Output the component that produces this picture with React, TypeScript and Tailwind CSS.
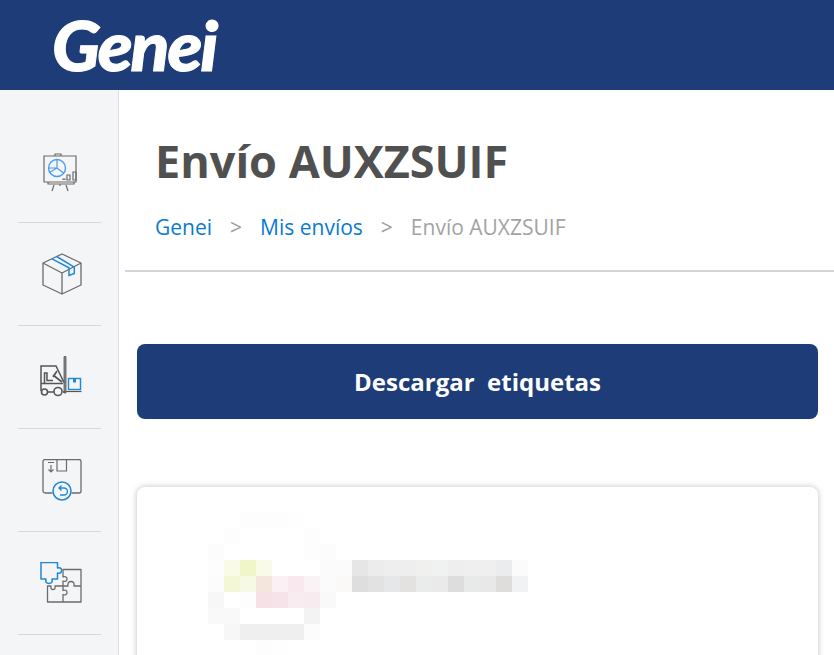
import React from 'react';

const font = "font-['Open_Sans',_'Liberation_Sans',_sans-serif]";

// blurred avatar + name, one row per 16px, starting at x=208 y=512
const mosaic: [number, number, string[]][] = [
  [0, 2, ['#fdfdfd', '#fdfdfd', '#fdfdfd', '#fefefe']],
  [1, 1, ['#fdfdfd', '#fff', '#fff', '#fff', '#fff', '#fdfdfd']],
  [2, 0, ['#fcfcfc', '#fff', '#fff', '#fff', '#fff', '#fff', '#fdfdfd', '#fcfcfc']],
  [3, 0, ['#fdfdfd', '#f9fbe8', '#f1f6c8', '#f9fbe8', '#fff', '#fff', '#fff', '#fbfbfb', '#fbfbfb', '#e6e6e6', '#ececec', '#eeeeee', '#eeeeee', '#f0f0ee', '#f0f2f1', '#eeeeee', '#efefef', '#efefef', '#ebecee', '#fbfbfb']],
  [4, 0, ['#fcfcfc', '#f4f7d5', '#f6f9e4', '#f4e6dc', '#fbf1f4', '#f9e9ee', '#faf3f6', '#fbfbfb', '#faf9f8', '#dedede', '#e2e2e2', '#e6e7e9', '#e4e2e0', '#e9ecea', '#eaeaea', '#dddddd', '#e8eae9', '#e8e8e8', '#dfdddc', '#f1f2f4']],
  [5, 0, ['#f7f7f7', '#fff', '#fdfdfd', '#f6e1e6', '#f6e3e9', '#f9ecf0', '#f7ebf0', '#f9f9f9']],
  [6, 0, ['#f9f9f9', '#f9f9f9', '#fff', '#fff', '#fff', '#fff', '#f3f3f3']],
  [7, 1, ['#f7f7f7', '#efefef', '#efefef', '#efefef', '#efefef', '#fcfcfc']],
  [8, 3, ['#fdfdfd', '#fefefe']],
];

function Logo() {
  return (
    <span className="origin-left scale-x-[1.05] font-['Lato',_sans-serif] text-[68px] leading-none font-black tracking-[-0.03em] text-white italic [-webkit-text-stroke:1px_white]">Genei</span>
  );
}

function ChartIcon() {
  return (
    <svg width="40" height="42" viewBox="0 0 40 42" fill="none" strokeWidth="1.2">
      <path d="M4 6h32v26H4z M15 6V4h6v2 M8 32v2h26v-2 M14 35l-2 6 M26 35l2 6 M20 34v2" stroke="#6b6b6b" />
      <circle cx="17" cy="18" r="8.5" stroke="#4a9cf0" strokeWidth="1.4" />
      <path d="M17 9.5V18l-7.500 4.500 M17 18l6.500 5 M8.500 18H17" stroke="#4a9cf0" strokeWidth="1.2" />
      <path d="M23 30v-1h2v1 M27 30v-5h3v5z M33 30v-8h3v8z" stroke="#6b6b6b" />
    </svg>
  );
}

function BoxIcon() {
  return (
    <svg width="40" height="42" viewBox="0 0 40 42" fill="none" className="ml-[5px]">
      <path d="M20 1L39 10V32L20 41L1 32V10z M1 10L20 20L39 10 M20 20V41" stroke="#6b6b6b" strokeWidth="1.3" strokeLinejoin="round" />
      <path d="M10 5.800L27 14.800V22.500L32.300 20.500V14.200L14.700 3.500" stroke="#1f87d6" strokeWidth="1.5" />
    </svg>
  );
}

function ForkliftIcon() {
  return (
    <svg width="42" height="42" viewBox="0 0 42 42" fill="none" className="ml-[3px]">
      <path d="M24 0.500h2v36.500h-2z" fill="#8a8a8a" stroke="#555555" strokeWidth="0.8" />
      <path d="M26 35.500h15.500" stroke="#555555" strokeWidth="1.2" />
      <path d="M1 35V10h15l8 16.500 M1 27.500h22 M4.500 27V17h2.500v7.500h6" stroke="#555555" strokeWidth="1.5" />
      <path d="M13 19l9 7 M17 15l-4 6" stroke="#555555" strokeWidth="1.7" />
      <path d="M8 36h6 M23 36h2" stroke="#555555" strokeWidth="1.5" />
      <circle cx="4.500" cy="36" r="3" fill="#f4f5f7" stroke="#555555" strokeWidth="1.6" />
      <circle cx="18" cy="35.500" r="4" fill="#f4f5f7" stroke="#555555" strokeWidth="1.6" />
      <rect x="28.500" y="22.500" width="12" height="11" stroke="#1f87d6" strokeWidth="1.4" />
      <rect x="33" y="23" width="3" height="3.500" fill="#1f87d6" />
    </svg>
  );
}

function ReturnIcon() {
  return (
    <svg width="40" height="42" viewBox="0 0 40 42" fill="none" className="ml-[4px]">
      <path d="M10.500 34H3a2 2 0 0 1-2-2V2.500a2 2 0 0 1 2-2h34a2 2 0 0 1 2 2V32a2 2 0 0 1-2 2h-7.500" stroke="#6b6b6b" strokeWidth="1.3" />
      <path d="M15 0.500V12h9.500V0.500 M6 3.500h6 M9 6v7 M6.500 10.500L9 13l2.500-2.500" stroke="#6b6b6b" strokeWidth="1.2" />
      <circle cx="20" cy="32" r="9" stroke="#1f87d6" strokeWidth="1.5" />
      <path d="M17 29h5a3.500 3.500 0 0 1 0 7h-4 M19.500 26.500L17 29l2.500 2.500" stroke="#1f87d6" strokeWidth="1.3" />
    </svg>
  );
}

function PuzzleIcon() {
  return (
    <svg width="42" height="42" viewBox="0 0 42 42" fill="none" className="ml-[3px]">
      <path d="M1 0.500h16.500V6c3.500-0.800 4 1 4 2.500s-0.500 3.300-4 2.500v6H12c0.800 3-0.500 4.500-3 4.500s-3.800-1.500-3-4.500H1z" stroke="#1f87d6" strokeWidth="1.5" strokeLinejoin="round" />
      <path d="M23 7.500h18V40H7.500V24H11c-0.500 3 0.500 3.500 2 3.500s2.500-0.500 2-3.500h8v-5c3 1 4-0.500 4-2s-1-3-4-2z" stroke="#6b6b6b" strokeWidth="1.3" strokeLinejoin="round" />
      <path d="M23 24h5c-0.500-3 0.500-4.500 3-4.500s3.500 1.500 3 4.500h7 M23 24v4.500c3-1 4 0.500 4 2s-1 3-4 2V40" stroke="#6b6b6b" strokeWidth="1.3" strokeLinejoin="round" />
    </svg>
  );
}

const navIcons = [ChartIcon, BoxIcon, ForkliftIcon, ReturnIcon, PuzzleIcon];

export default function App() {
  return (
    <div className={`${font} flex h-[655px] w-[834px] flex-col overflow-hidden bg-white`}>
      <header className="flex h-[90px] shrink-0 items-center bg-[#1e3d78] pl-[52px]">
        <Logo />
      </header>

      <div className="flex min-h-0 flex-1">
        <aside className="w-[119px] shrink-0 border-r border-[#dcdddf] bg-[#f4f5f7] pt-[30px]">
          {navIcons.map((Icon, i) => (
            <div key={i} className="mr-[17px] ml-[18px] flex h-[103px] items-center justify-center border-b border-[#d8d8d8]">
              <Icon />
            </div>
          ))}
        </aside>

        <main className="min-w-0 flex-1">
          <div className="ml-[6px] h-[182px] border-b-2 border-[#d6d6d6] pl-[30px] pt-[41px]">
            <h1 className="text-[45px] leading-[60px] font-bold text-[#505050]">Envío AUXZSUIF</h1>
            <nav className="mt-[22px] flex items-center text-[21px] leading-[28px]">
              <a className="text-[#0a7ad1]">Genei</a>
              <span className="mx-[18px] text-[#9b9b9b]">&gt;</span>
              <a className="text-[#0a7ad1]">Mis envíos</a>
              <span className="mx-[18px] text-[#9b9b9b]">&gt;</span>
              <span className="text-[#a3a3a3]">Envío AUXZSUIF</span>
            </nav>
          </div>

          <div className="pr-[16px] pl-[18px]">
            <button className="mt-[72px] flex h-[75px] w-full items-center justify-center rounded-lg bg-[#1e3d78] text-[24px] font-bold whitespace-pre text-white">
              Descargar  etiquetas
            </button>

            <section className="mt-[68px] h-[240px] rounded-lg bg-white pt-[25px] pl-[71px] shadow-[0_0_6px_rgba(0,0,0,0.25)]">
              <svg width="320" height="144" viewBox="0 0 320 144" shapeRendering="crispEdges">
                {mosaic.map(([row, start, cells]) =>
                  cells.map((fill, col) => (
                    <rect key={`${row}-${col}`} x={(start + col) * 16} y={row * 16} width="16" height="16" fill={fill} />
                  )),
                )}
              </svg>
            </section>
          </div>
        </main>
      </div>
    </div>
  );
}
